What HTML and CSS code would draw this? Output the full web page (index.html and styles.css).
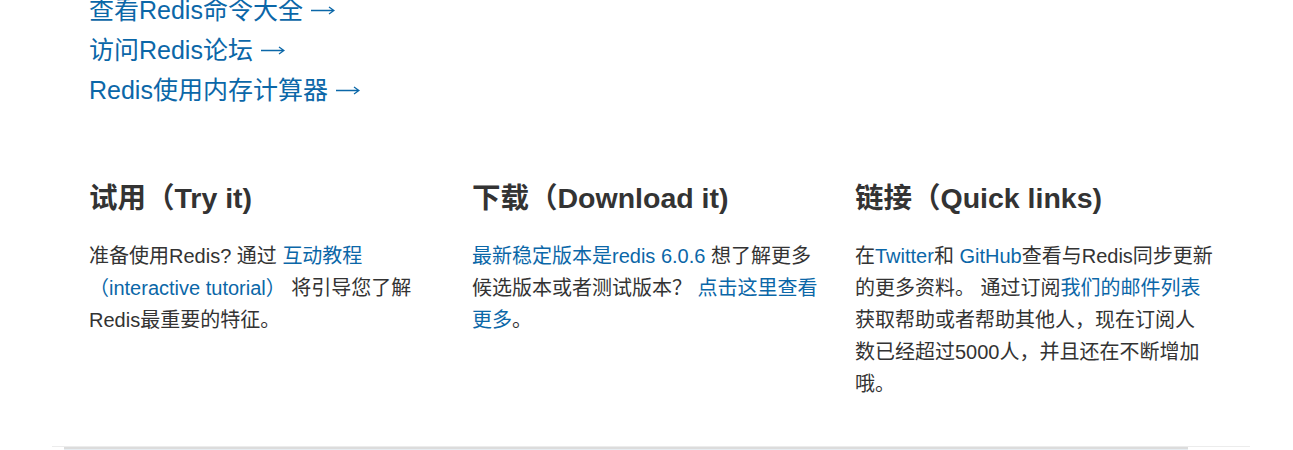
FILE: index.html
```html
<!DOCTYPE html>
<html lang="zh-CN">
<head>
<meta charset="utf-8">
<title>Redis</title>
<link rel="stylesheet" href="styles.css">
</head>
<body>
<div class="container">
  <ul class="more-links">
    <li><a href="#">查看Redis命令大全 <svg class="arrow" width="24" height="10" viewBox="0 0 24 10"><path d="M0 5.5H22.5M18 2L23 5.5L18 9" fill="none" stroke="currentColor" stroke-width="1.3"/></svg></a></li>
    <li><a href="#">访问Redis论坛 <svg class="arrow" width="24" height="10" viewBox="0 0 24 10"><path d="M0 5.5H22.5M18 2L23 5.5L18 9" fill="none" stroke="currentColor" stroke-width="1.3"/></svg></a></li>
    <li><a href="#">Redis使用内存计算器 <svg class="arrow" width="24" height="10" viewBox="0 0 24 10"><path d="M0 5.5H22.5M18 2L23 5.5L18 9" fill="none" stroke="currentColor" stroke-width="1.3"/></svg></a></li>
  </ul>

  <div class="cols">
    <section class="col">
      <h2 class="col-title">试用（Try it)</h2>
      <p class="col-text">准备使用Redis? 通过 <a href="#">互动教程（interactive tutorial）</a> 将引导您了解Redis最重要的特征。</p>
    </section>
    <section class="col">
      <h2 class="col-title">下载（Download it)</h2>
      <p class="col-text"><a href="#">最新稳定版本是redis 6.0.6</a> 想了解更多候选版本或者测试版本？ <a href="#">点击这里查看更多</a>。</p>
    </section>
    <section class="col">
      <h2 class="col-title">链接（Quick links)</h2>
      <p class="col-text">在<a href="#">Twitter</a>和 <a href="#">GitHub</a>查看与Redis同步更新的更多资料。 通过订阅<a href="#">我们的邮件列表</a>获取帮助或者帮助其他人，现在订阅人数已经超过5000人，并且还在不断增加哦。</p>
    </section>
  </div>

  <div class="divider"></div>
  <div class="footer-box"></div>
</div>
</body>
</html>
```

FILE: styles.css
```css
html, body {
  margin: 0;
  padding: 0;
  background: #fff;
  overflow: hidden;
}

body {
  font-family: "Liberation Sans", "Noto Sans CJK SC", sans-serif;
  color: #333;
}

a {
  color: #0b67a8;
  text-decoration: none;
}

.container {
  width: 1198px;
  margin-left: 52px;
}

.more-links {
  list-style: none;
  margin: -10px 0 0 0;
  padding: 0 0 0 37px;
}

.more-links li {
  font-size: 25px;
  line-height: 40px;
  height: 40px;
  white-space: nowrap;
}

.arrow {
  vertical-align: middle;
  margin-left: 1px;
  position: relative;
  top: -2px;
}

.cols {
  display: flex;
  padding-left: 37px;
  margin-top: 68px;
}

.col {
  width: 358px;
  margin-right: 25px;
}

.col-title {
  margin: 0;
  font-size: 28.5px;
  line-height: 40px;
  font-weight: bold;
  color: #333;
  white-space: nowrap;
}

.col-text {
  margin: 22px 0 0 0;
  font-size: 20px;
  line-height: 32px;
}

.divider {
  margin-top: 46px;
  border-top: 1px solid #ececec;
  height: 0;
}

.footer-box {
  margin-left: 12px;
  width: 1124px;
  height: 10px;
  border-top: 2px solid #dcdcdc;
  background: #e6edf2;
}
```
